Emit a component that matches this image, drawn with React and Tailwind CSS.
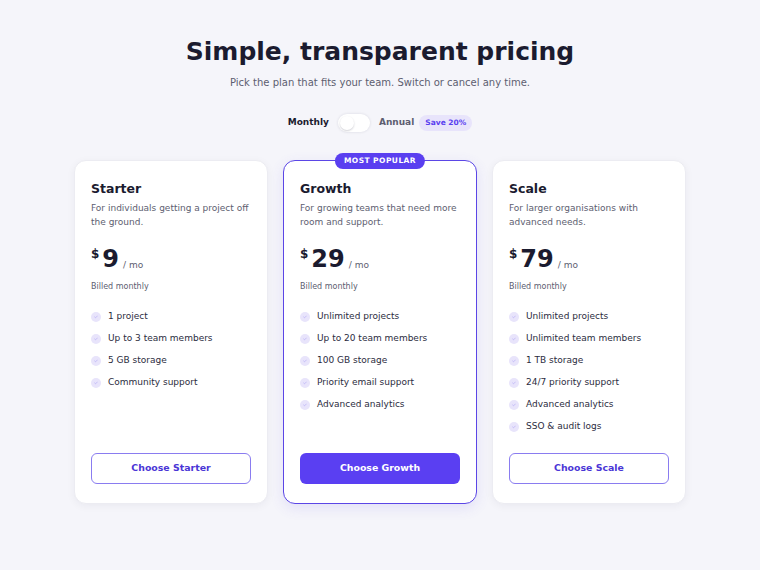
import { Check } from 'lucide-react';

const plans = [
  {
    name: 'Starter',
    blurb: 'For individuals getting a project off the ground.',
    price: 9,
    features: ['1 project', 'Up to 3 team members', '5 GB storage', 'Community support'],
  },
  {
    name: 'Growth',
    blurb: 'For growing teams that need more room and support.',
    price: 29,
    popular: true,
    features: [
      'Unlimited projects',
      'Up to 20 team members',
      '100 GB storage',
      'Priority email support',
      'Advanced analytics',
    ],
  },
  {
    name: 'Scale',
    blurb: 'For larger organisations with advanced needs.',
    price: 79,
    features: [
      'Unlimited projects',
      'Unlimited team members',
      '1 TB storage',
      '24/7 priority support',
      'Advanced analytics',
      'SSO & audit logs',
    ],
  },
];

function PlanCard({ plan }) {
  const { name, blurb, price, features, popular } = plan;
  return (
    <div
      className={
        'relative flex h-[344px] flex-col rounded-xl bg-white px-[16px] pt-[19px] pb-[19px] ' +
        (popular
          ? 'border-[1.5px] border-[#5b46e6] shadow-[0_4px_14px_rgba(91,70,230,0.12)]'
          : 'border border-[#ececf2] shadow-[0_2px_8px_rgba(20,20,50,0.05)]')
      }
    >
      {popular && (
        <div className="absolute -top-[8px] left-1/2 -translate-x-1/2 rounded-full bg-[#5a3ff0] px-[9px] py-[3px] text-[7.5px] font-bold leading-[10px] tracking-[0.06em] text-white whitespace-nowrap">
          MOST POPULAR
        </div>
      )}
      <h2 className="text-[12.5px] font-bold leading-[17px] text-[#1b1b2f]">{name}</h2>
      <p className="mt-[5px] text-[9px] leading-[13.5px] text-[#5d5e70]">{blurb}</p>

      <div className="mt-[17px] flex items-end">
        <span className="self-start mt-[2px] text-[12px] font-bold leading-none text-[#1b1b2f]">$</span>
        <span className="ml-[3px] text-[24px] font-bold leading-[27px] text-[#1b1b2f]">{price}</span>
        <span className="ml-[4px] mb-[1px] text-[9px] text-[#5d5e70]">/ mo</span>
      </div>
      <p className="mt-[8px] text-[8px] leading-[11px] text-[#5d5e70]">Billed monthly</p>

      <ul className="mt-[18px] flex flex-col gap-[9px]">
        {features.map((f) => (
          <li key={f} className="flex items-center gap-[7px] text-[9px] leading-[13px] text-[#2b2c3e]">
            <span className="flex h-[10px] w-[10px] shrink-0 items-center justify-center rounded-full bg-[#e8e4fb]">
              <Check className="h-[4px] w-[4px] text-[#a598f2]" strokeWidth={3} />
            </span>
            {f}
          </li>
        ))}
      </ul>

      <button
        className={
          'mt-auto h-[31px] w-full rounded-md text-[9.4px] font-bold ' +
          (popular
            ? 'bg-[#5a3ff2] text-white'
            : 'border border-[#8a7cf0] bg-white text-[#4a36d6]')
        }
      >
        Choose {name}
      </button>
    </div>
  );
}

export default function App() {
  return (
    <div
      className="min-h-[570px] bg-[#f5f5fa] pt-[37px] pb-10"
      style={{ fontFamily: '"DejaVu Sans", sans-serif' }}
    >
      <h1 className="text-center text-[25px] font-bold leading-[30px] text-[#1b1b2f]">
        Simple, transparent pricing
      </h1>
      <p className="mt-[8px] text-center text-[10px] text-[#5d5e70]">
        Pick the plan that fits your team. Switch or cancel any time.
      </p>

      <div className="mt-[24px] flex items-center justify-center">
        <span className="text-[9px] font-bold text-[#1b1b2f]">Monthly</span>
        <span className="ml-[9px] flex h-[18px] w-[32px] items-center rounded-full bg-white p-[2px] shadow-[0_0_3px_rgba(20,20,50,0.12)]">
          <span className="h-[14px] w-[14px] rounded-full bg-white shadow-[0_1px_2px_rgba(20,20,50,0.2)]" />
        </span>
        <span className="ml-[9px] text-[9px] font-bold text-[#5d5e70]">Annual</span>
        <span className="ml-[5px] rounded-full bg-[#e8e4fb] px-[6px] py-[2px] text-[7.5px] font-bold text-[#5a3ff0]">
          Save 20%
        </span>
      </div>

      <div className="mx-auto mt-[28px] grid w-[612px] grid-cols-3 gap-[15px]">
        {plans.map((p) => (
          <PlanCard key={p.name} plan={p} />
        ))}
      </div>
    </div>
  );
}
